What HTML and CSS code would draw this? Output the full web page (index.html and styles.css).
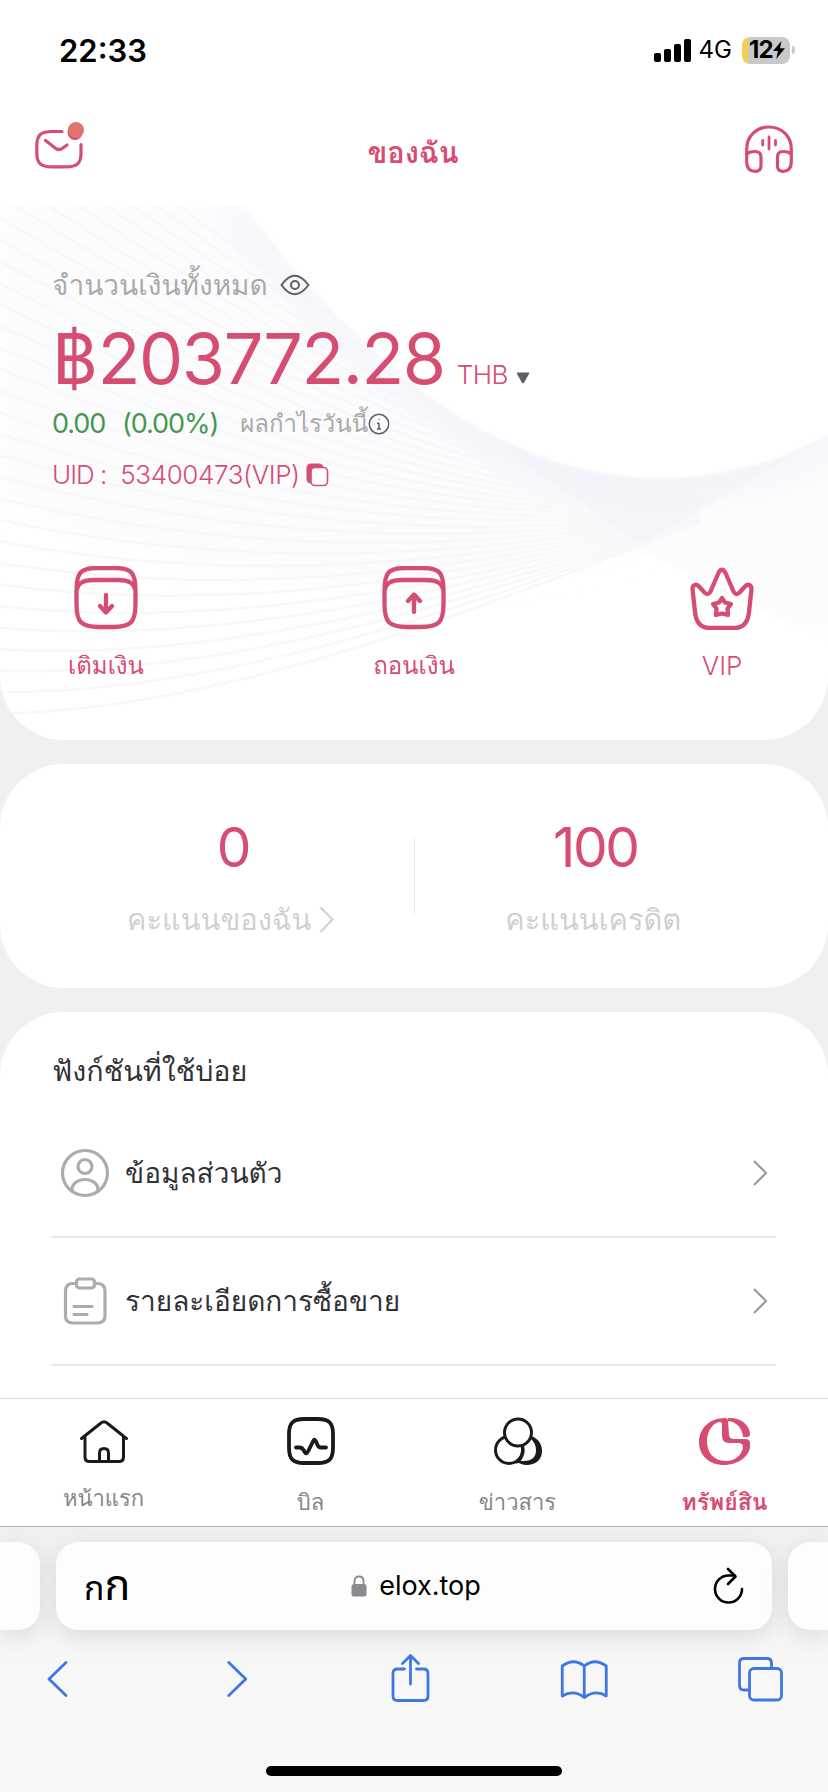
FILE: index.html
```
<!DOCTYPE html>
<html lang="th">
<head>
<meta charset="utf-8">
<title>ของฉัน</title>
<link rel="stylesheet" href="styles.css">
</head>
<body>
<div class="screen">
  <div class="status">
    <span class="clock"><span class="t">22:33</span></span>
    <div class="status-right">
      <svg class="signal" width="38" height="24" viewBox="652 37 38 24"><rect x="653" y="52" width="7" height="9" rx="2"/><rect x="663" y="48" width="7" height="13" rx="2"/><rect x="673" y="43" width="7" height="18" rx="2"/><rect x="683" y="38" width="7" height="23" rx="2"/></svg>
      <span class="net"><span class="t">4G</span></span>
      <div class="battery"><span class="t">12</span><svg width="12" height="18" viewBox="0 0 12 18"><path d="M8.5 0 0 10h5L3.2 18 12 7.2H7z"/></svg></div>
      <i class="nub"></i>
    </div>
  </div>

  <header class="topbar">
    <svg class="line" width="52" height="52" viewBox="34 121 52 52"><path d="M62 131.500H52C41 131.500 36.800 134.500 36.800 146V153C36.800 163.500 41 166.800 52 166.800H66C77 166.800 81 163.500 81 153V144.500M45.500 140.500 55.500 148.200Q59 150.800 62.500 148.200L67 145"/><circle class="badge-back" cx="75" cy="132.500" r="7.500"/><circle class="badge" cx="76" cy="130" r="8"/></svg>
    <h1 class="title"><span class="t">ของฉัน</span></h1>
    <svg class="line" width="50" height="52" viewBox="744 121 50 52"><path d="M746.700 162V149C746.700 136 756.500 127 769 127S791.300 136 791.300 149V162M746.700 155C748 152 751 151.500 755 151.500Q761 151.500 761 157V166Q761 171.300 755 171.300 746.700 171 746.700 162M791.300 155C790 152 787 151.500 783 151.500Q777.500 151.500 777.500 157V166Q777.500 171.300 783 171.300 791.300 171 791.300 162"/><path class="thin" d="M762.700 140.500V145M769 137V149M775.500 140.500V145"/></svg>
  </header>

  <main class="content">
    <section class="hero">
      <svg class="waves" width="828" height="534" viewBox="0 206 828 534">
        <defs>
          <linearGradient id="fade" x1="0" y1="0" x2="0" y2="1"><stop offset="0" stop-color="#f7f7fb"/><stop offset="1" stop-color="#fcfcfe"/></linearGradient>
          <filter id="soft" x="-20%" y="-20%" width="140%" height="140%"><feGaussianBlur stdDeviation="12"/></filter>
          <filter id="edge" x="-20%" y="-20%" width="140%" height="140%"><feGaussianBlur stdDeviation="1.500"/></filter>
        </defs>
        <path fill="#fcfcfe" d="M0 206H300L660 478 636 550Q320 640 0 500Z" filter="url(#soft)"/>
        <path fill="url(#fade)" d="M400 380 660 478 828 430V642L636 550 560 540Z" opacity=".6"/>
        <g id="wave-lines"></g>
        <path fill="none" stroke="#f3f3f9" stroke-width="30" opacity=".65" filter="url(#soft)" d="M230 206C380 400 520 482 660 484 730 484 785 466 840 436"/>
        <path fill="#f3f3f9" opacity=".75" filter="url(#edge)" d="M480 432 640 544 828 436 660 478Z"/>
        <path fill="#fff" filter="url(#edge)" d="M240 200C380 390 520 478 660 478 730 478 785 460 840 428V200Z"/>
      </svg>
      <div class="hero-body">
        <div class="total"><span class="t">จำนวนเงินทั้งหมด</span>
          <svg class="dark" width="32" height="24" viewBox="279 270 32 24"><path d="M281.500 282Q294.500 263.500 308.500 282 294.500 300.500 281.500 282Z"/><circle cx="295" cy="282" r="4"/></svg></div>
        <div class="amount"><span class="baht"><span class="t">฿</span></span><span class="num"><span class="t">203772.28</span></span><span class="cur"><span class="t">THB</span></span>
          <svg width="14" height="12" viewBox="0 0 14 12"><path fill="#5d5f66" d="M1.500.5h11q1.200 0 .6 1.200L8 10.700q-1 1.200-2 0L.900 1.700Q.3.500 1.500.5Z"/></svg></div>
        <div class="profit"><span class="green"><span class="t">0.00</span></span><span class="green pct"><span class="t">(0.00%)</span></span><span class="plabel"><span class="t">ผลกำไรวันนี้</span></span>
          <svg class="dark info" width="22" height="22" viewBox="0 0 22 22"><circle cx="11" cy="11" r="9.700"/><path d="M11 10v6M9 10.300h2M9 16h4M11 5.800v1"/></svg></div>
        <div class="uid"><span class="u1"><span class="t">UID :</span></span><span class="u2"><span class="t">53400473(VIP)</span></span>
          <svg class="copy" width="24" height="26" viewBox="305 462 24 26"><rect x="306.500" y="463.500" width="17" height="20" rx="4.500" fill="#d64d73"/><rect x="311" y="467.500" width="16.500" height="18" rx="4" fill="#fff" stroke="#d64d73" stroke-width="1.600"/></svg></div>
        <nav class="actions">
          <a class="action"><svg class="line bold" width="64" height="64" viewBox="74 565 64 64"><path d="M76.500 590C76.500 572 80 567 97 567H115C132 567 135.500 572 135.500 590V603C135.500 621 131 626 113 626H99C81 626 76.500 621 76.500 603V590C78 582 83 579 94 579H118C129 579 134 582 135.500 590M106 594V611M100 605 106 611.500 112 605"/></svg><span class="t">เติมเงิน</span></a>
          <a class="action"><svg class="line bold" width="64" height="64" viewBox="74 565 64 64"><path d="M76.500 590C76.500 572 80 567 97 567H115C132 567 135.500 572 135.500 590V603C135.500 621 131 626 113 626H99C81 626 76.500 621 76.500 603V590C78 582 83 579 94 579H118C129 579 134 582 135.500 590M106 611V594M100 600 106 593.500 112 600"/></svg><span class="t">ถอนเงิน</span></a>
          <a class="action vip"><svg class="line bold" width="64" height="64" viewBox="690 565 64 64"><path d="M692.500 588C692.500 583.500 696 582.500 699 585.500L704.500 591.500Q708 595 710.500 590.500L718.500 572Q722 565.500 725.500 572L733.500 590.500Q736 595 739.500 591.500L745 585.500C748 582.500 751.500 583.500 751.500 588L749 611Q747.500 626.500 735 627H709Q696.500 626.500 695 611Z"/><path d="M722 597 725 601.500 731 603 727.500 607.500 728 614 722 612.500 716 614 716.500 607.500 713 603 719 601.500Z"/></svg><span class="t">VIP</span></a>
        </nav>
      </div>
    </section>

    <section class="stats">
      <div class="stat"><b><span class="t">0</span></b><div class="slabel"><span class="t">คะแนนของฉัน</span><svg width="15" height="28" viewBox="0 0 15 28"><path d="M1.500 1.500 13.500 13.500 1.500 26" fill="none" stroke="#d0d0d0" stroke-width="2"/></svg></div></div>
      <i class="sep"></i>
      <div class="stat"><b><span class="t">100</span></b><div class="slabel"><span class="t">คะแนนเครดิต</span></div></div>
    </section>

    <section class="list">
      <h2><span class="t">ฟังก์ชันที่ใช้บ่อย</span></h2>
      <div class="row"><svg class="grey" width="48" height="50" viewBox="61 1146 48 50"><circle cx="85" cy="1171" r="22.500"/><circle cx="85" cy="1164.500" r="7"/><path d="M72 1189V1188C72 1174 98 1174 98 1188V1189"/></svg><span class="rt"><span class="t">ข้อมูลส่วนตัว</span></span><svg class="chev" width="16" height="28" viewBox="0 0 16 28"><path d="M2 2 14 14 2 26"/></svg></div>
      <div class="row"><svg class="grey" width="48" height="50" viewBox="61 1274 48 50"><path d="M76 1281.500H73Q65.500 1281.500 65.500 1289V1314Q65.500 1321 73 1321H97Q105 1321 105 1314V1289Q105 1281.500 97 1281.500H95M74 1304.500H92M74 1312.500H87"/><rect x="76.500" y="1277" width="18" height="9" rx="3"/></svg><span class="rt"><span class="t">รายละเอียดการซื้อขาย</span></span><svg class="chev" width="16" height="28" viewBox="0 0 16 28"><path d="M2 2 14 14 2 26"/></svg></div>
    </section>
  </main>

  <nav class="tabs">
    <a class="tab home"><svg class="ink" width="52" height="52" viewBox="77 1415 52 52"><path d="M80.500 1438.500 100 1423Q103 1420.500 106 1423L125.500 1438.500M84 1436V1457Q84 1461.500 88.500 1461.500H118Q122.500 1461.500 122.500 1457V1436M98.500 1461V1453Q98.500 1448.500 103 1448.500 107.500 1448.500 107.500 1453V1461"/></svg><span class="t">หน้าแรก</span></a>
    <a class="tab"><svg class="ink thick" width="52" height="52" viewBox="284 1415 52 52"><path d="M288 1434C288 1423 292 1419 303 1419H317C328 1419 332 1423 332 1434V1448C332 1459 328 1463 317 1463H303C292 1463 288 1459 288 1448ZM295 1447.500H298.500Q301 1447.500 302.500 1450L304 1452.500Q305.500 1454.500 307 1451.500L312.500 1440.500Q313.500 1438.500 315 1441.500L316.500 1445Q317.500 1447.500 320 1447.500H325"/></svg><span class="t">บิล</span></a>
    <a class="tab"><svg class="ink" width="52" height="52" viewBox="491 1415 52 52"><path fill="#1a1a1a" stroke="none" d="M529 1435.500C537 1438 541 1444 541 1451C541 1460 534 1465 526 1465 521 1465 518 1463 514 1461L523 1461C531 1461 535 1457 535 1450 535 1444 532 1441 529 1438Z"/><circle cx="508" cy="1450" r="13.500"/><circle cx="517" cy="1432.500" r="13.500" fill="#fff"/><path d="M521.500 1446C524 1453 519 1461 516 1462"/></svg><span class="t">ข่าวสาร</span></a>
    <a class="tab on"><svg width="54" height="52" viewBox="697 1415 54 52"><path fill="#d64d73" fill-rule="evenodd" d="M724 1418C708 1418 698 1429 698 1442C698 1456 709 1465 723 1465C737 1465 749 1456 749 1446V1443Q749 1439 744 1439L733 1439Q728.500 1439 728 1435L727 1421Q727 1418 724 1418ZM719 1422Q721 1422 721 1425V1436Q721 1443 728 1443H737Q742 1443 742 1447C741 1455 734 1461 725 1461C712 1461 706 1452 706 1441C706 1430 713 1422 719 1422Z"/><path fill="#d64d73" d="M727 1418C739 1417 749 1425 749 1434Q749 1437 746 1437H742C741 1428 736 1422 727 1421Z"/></svg><span class="t">ทรัพย์สิน</span></a>
  </nav>

  <footer class="browser">
    <div class="urlrow">
      <div class="peek left"></div>
      <div class="urlbar"><span class="aa"><small>ก</small><big>ก</big></span>
        <div class="url"><svg width="16" height="22" viewBox="0 0 16 22"><rect x="0.500" y="9" width="15" height="12.500" rx="2.500" fill="#8a8a8e"/><path d="M3.500 10V6Q3.500 1.500 8 1.500T12.500 6V10" fill="none" stroke="#8a8a8e" stroke-width="1.800"/></svg><span class="t">elox.top</span></div>
        <svg class="reload" width="32" height="38" viewBox="711 1565 32 38"><path d="M741 1587A13.500 13.500 0 1 1 727.500 1573.500H734M727 1567 734.500 1574.500 727 1582"/></svg></div>
      <div class="peek right"></div>
    </div>
    <div class="tools">
      <svg width="50" height="50" viewBox="32 1655 50 50"><path d="M66 1663.500 49 1680 66 1696.500"/></svg>
      <svg width="50" height="50" viewBox="207.750 1655 50 50"><path d="M228.500 1663.500 245.500 1680 228.500 1696.500"/></svg>
      <svg width="50" height="50" viewBox="383.500 1655 50 50"><path d="M404 1670H397Q392.500 1670 392.500 1674.500V1697Q392.500 1701.500 397 1701.500H423Q427.500 1701.500 427.500 1697V1674.500Q427.500 1670 423 1670H416M410 1685V1657M402 1664.500 410 1656.500 418 1664.500"/></svg>
      <svg width="50" height="50" viewBox="559.250 1655 50 50"><path d="M584.500 1667Q574 1658.500 562.500 1667V1697Q574 1690 584.500 1698.500 596 1690 606.500 1697V1667Q595 1658.500 584.500 1667V1698.500"/></svg>
      <svg width="50" height="50" viewBox="735 1655 50 50"><path d="M748 1691H744Q739.500 1691 739.500 1686.500V1664Q739.500 1659.500 744 1659.500H767Q771.500 1659.500 771.500 1664V1669"/><rect x="749.500" y="1669.500" width="32" height="31.500" rx="4.500"/></svg>
    </div>
    <i class="homebar"></i>
  </footer>
</div>
<script src="waves.js"></script>
</body>
</html>
```
FILE: styles.css
```
* { box-sizing: border-box; }
body { margin: 0; background: #fff; font-family: Inter, Loma, "Noto Sans", sans-serif; }
h1, h2 { margin: 0; font-weight: 400; }
svg { display: block; flex: none; }
.t { white-space: nowrap; display: inline-block; line-height: 36px; }
.screen { width: 828px; height: 1792px; overflow: hidden; display: flex; flex-direction: column; }
.status { height: 100px; padding: 0 33px 0 59px; display: flex; align-items: center; justify-content: space-between; }
.clock { font-size: 31px; font-weight: 600; color: #000; }
.status-right { display: flex; align-items: center; }
.net { font-size: 24px; margin: 0 10px 0 8px; }
.battery { width: 48px; height: 27px; border-radius: 8px; background: linear-gradient(90deg, #f4cf55 6px, #c9c9c9 6px); display: flex; align-items: center; justify-content: center; font-size: 24px; font-weight: 700; padding-left: 2px; letter-spacing: -.7px; }
.nub { width: 3px; height: 8px; margin-left: 2px; border-radius: 0 4px 4px 0; background: #c9c9c9; }
.topbar { height: 106px; padding: 0 34px 12px; display: flex; align-items: center; justify-content: space-between; }
.line { fill: none; stroke: #d64d73; stroke-width: 3.200; stroke-linecap: round; stroke-linejoin: round; }
.line .thin { stroke-width: 2.800; }
.line.bold { stroke-width: 4.300; }
.line .badge { fill: #e0746d; stroke: none; }
.line .badge-back { fill: #d64d73; stroke: none; }
.title { font-size: 29px; font-weight: 700; color: #d64d73; margin-top: 12px; margin-right: 4px; }
.content { height: 1192px; background: #f0f0f0; display: flex; flex-direction: column; gap: 24px; overflow: hidden; flex: none; }
.hero { height: 534px; flex: none; background: #fff; border-radius: 0 0 64px 64px; overflow: hidden; display: grid; }
.hero > * { grid-area: 1 / 1; }
.hero-body { position: relative; padding: 55px 52px 0; color: #d64d73; }
.total { height: 48px; display: flex; align-items: center; gap: 11px; font-size: 28px; color: #aaa; }
.dark { fill: none; stroke: #5d5f66; stroke-width: 2; }
.dark.info { stroke-width: 1.500; }
.amount { height: 90px; padding-top: 7px; display: flex; align-items: baseline; font-size: 70px; }
.amount .t { line-height: 84px; }
.num { letter-spacing: -1.400px; }
.amount .cur .t { line-height: 30px; }
.cur { font-size: 26px; margin-left: 12px; margin-right: 8px; font-weight: 300; letter-spacing: -.5px; }
.profit { height: 50px; display: flex; align-items: center; font-size: 27px; letter-spacing: -1.100px; }
.green { color: #43984d; }
.pct { margin-left: 17px; }
.plabel { color: #aaa; margin-left: 22px; font-size: 24px; letter-spacing: 0; }
.uid { height: 52px; display: flex; align-items: center; font-size: 26px; font-weight: 300; letter-spacing: -.4px; }
.u1 { letter-spacing: -1px; }
.u2 { margin-left: 14px; }
.copy { margin-left: 5px; }
.actions { display: flex; justify-content: space-between; margin-top: 65px; }
.action { width: 108px; display: flex; flex-direction: column; align-items: center; gap: 18px; font-size: 24px; }
.vip { font-weight: 300; font-size: 26px; }
.stats { height: 224px; flex: none; background: #fff; border-radius: 64px; display: flex; align-items: center; padding: 0 52px; }
.stat { flex: 1; display: flex; flex-direction: column; align-items: center; color: #d64d73; gap: 22px; }
.stat b { font-size: 55px; font-weight: 400; letter-spacing: -2.500px; }
.stat b .t { line-height: 60px; }
.slabel { color: #d0d0d0; font-size: 29px; display: flex; align-items: center; gap: 8px; margin-right: 4px; }
.sep { width: 1px; height: 76px; background: #e8e8e8; }
.list { height: 400px; flex: none; background: #fff; border-radius: 64px 64px 0 0; padding: 41px 52px 0; color: #303236; }
.list h2 { font-size: 28.700px; height: 57px; }
.row { height: 128px; display: flex; align-items: center; border-bottom: 2px solid #e8e8e8; padding: 0 8px 0 9px; }
.grey { fill: none; stroke: #acacac; stroke-width: 3.200; stroke-linecap: round; }
.rt { font-size: 28px; margin-left: 16px; flex: 1; }
.chev { fill: none; stroke: #999; stroke-width: 2; }
.tabs { height: 129px; flex: none; background: #fff; border-top: 1px solid #d4d4d4; border-bottom: 1px solid #b8b8b8; display: flex; }
.tab { flex: 1; display: flex; flex-direction: column; align-items: center; padding-top: 16px; gap: 17px; font-size: 22px; color: #868686; }
.tab.home { gap: 13px; }
.tab.on { color: #d64d73; font-weight: 700; font-size: 23px; }
.ink { fill: none; stroke: #1a1a1a; stroke-width: 3; stroke-linecap: round; stroke-linejoin: round; }
.ink.thick { stroke-width: 3.800; }
.browser { height: 265px; background: linear-gradient(#f0f0f0, #f7f7f8 50%); display: flex; flex-direction: column; align-items: center; padding-top: 15px; }
.urlrow { width: 828px; display: flex; gap: 16px; height: 88px; }
.peek, .urlbar { background: #fdfdfd; box-shadow: 0 6px 24px rgba(0,0,0,.11); }
.peek.left { width: 40px; border-radius: 0 22px 22px 0; }
.peek.right { width: 40px; border-radius: 22px 0 0 22px; }
.urlbar { flex: 1; border-radius: 22px; padding: 0 28px; display: flex; align-items: center; justify-content: space-between; }
.aa { display: flex; align-items: baseline; color: #000; font-family: "Noto Sans Thai", Loma, sans-serif; width: 36px; }
.aa small { font-size: 34px; }
.aa big { font-size: 43px; }
.url { display: flex; gap: 12px; align-items: center; font-size: 27px; color: #000; }
.reload { fill: none; stroke: #000; stroke-width: 2.600; stroke-linecap: round; stroke-linejoin: round; }
.tools { width: 828px; padding: 0 43px 0 32px; height: 98px; display: flex; justify-content: space-between; align-items: center; fill: none; stroke: #3f78e0; stroke-width: 2.800; stroke-linecap: round; stroke-linejoin: round; }
.homebar { width: 296px; height: 10px; border-radius: 5px; background: #000; margin-top: 38px; }
```
FILE: waves.js
```
const group = document.getElementById('wave-lines');
const mix = (a, b, t) => a + (b - a) * t;
for (let i = 0; i <= 30; i++) {
  const t = i / 30;
  const p = document.createElementNS('http://www.w3.org/2000/svg', 'path');
  p.setAttribute('d', `M-10 ${mix(60, 714, t)}C200 ${mix(220, 712, t)} 430 ${mix(420, 630, t)} 700 ${mix(500, 522, t)}`);
  p.setAttribute('fill', 'none');
  p.setAttribute('stroke', '#f8f8fb');
  p.setAttribute('stroke-width', '2.500');
  group.appendChild(p);
}
```
